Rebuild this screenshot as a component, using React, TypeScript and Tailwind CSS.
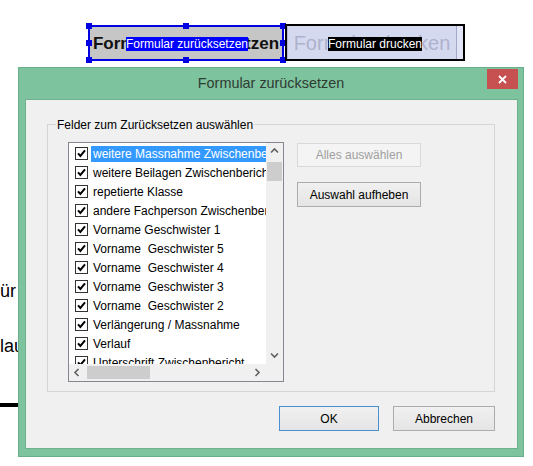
import React from "react";

const Check = () => (
  <svg width="13" height="13" viewBox="0 0 13 13" className="shrink-0">
    <rect x="0.5" y="0.5" width="12" height="12" fill="#fff" stroke="#333" />
    <path d="M3 6.3 L5.4 9 L10 3.4" fill="none" stroke="#000" strokeWidth="2" />
  </svg>
);

const Chevron = ({ dir }: { dir: "up" | "down" | "left" | "right" }) => {
  const d =
    dir === "up"
      ? "M1 5.5 L4.5 2 L8 5.5"
      : dir === "down"
      ? "M1 2.5 L4.5 6 L8 2.5"
      : dir === "left"
      ? "M5.5 1 L2 4.5 L5.5 8"
      : "M2.5 1 L6 4.5 L2.5 8";
  return (
    <svg width="9" height="9" viewBox="0 0 9 9">
      <path d={d} fill="none" stroke="#606060" strokeWidth="1.6" />
    </svg>
  );
};

const items = [
  "weitere Massnahme Zwischenbericht",
  "weitere Beilagen Zwischenbericht",
  "repetierte Klasse",
  "andere Fachperson Zwischenbericht",
  "Vorname Geschwister 1",
  "Vorname  Geschwister 5",
  "Vorname  Geschwister 4",
  "Vorname  Geschwister 3",
  "Vorname  Geschwister 2",
  "Verlängerung / Massnahme",
  "Verlauf",
  "Unterschrift Zwischenbericht",
];

const handles = [
  "left-[86px] top-[23px]",
  "left-[183px] top-[23px]",
  "left-[280px] top-[23px]",
  "left-[86px] top-[40px]",
  "left-[280px] top-[40px]",
  "left-[86px] top-[57px]",
  "left-[183px] top-[57px]",
  "left-[280px] top-[57px]",
];

export default function App() {
  return (
    <div className="relative w-[533px] h-[466px] overflow-hidden bg-white font-['Liberation_Sans',Arial,sans-serif]">
      {/* form canvas behind the dialog */}
      <div className="absolute left-[88px] top-[25px] w-[196px] h-[36px] border-2 border-[#0000e0] bg-[#c6c6c6] flex items-center justify-center">
        <span className="text-[17px] font-bold leading-none text-[#111]">Formular zurücksetzen</span>
      </div>
      {handles.map((h) => (
        <div key={h} className={`absolute ${h} w-[6px] h-[6px] bg-[#0000e0]`} />
      ))}
      <div className="absolute left-[126px] top-[37px] bg-[#0000ff] text-white text-[12px] leading-[14px] whitespace-nowrap">
        Formular zurücksetzen
      </div>

      <div className="absolute left-[285px] top-[24px] w-[180px] h-[37px] border-2 border-black bg-[#d5d9f0] flex">
        <div className="flex-1 border-l border-[#b4b8d4] flex items-center justify-center">
          <span className="text-[20px] leading-none text-[#aeb2cc] whitespace-nowrap">Formular drucken</span>
        </div>
        <div className="w-[7px] border-l border-[#a4a8c4] bg-[#e2e5f8]" />
      </div>
      <div className="absolute left-[328px] top-[37px] bg-black text-white text-[12px] leading-[14px] whitespace-nowrap">
        Formular drucken
      </div>

      <div className="absolute left-0 top-[282px] text-[18px] leading-[18px] text-black">ür</div>
      <div className="absolute left-0 top-[337px] text-[18px] leading-[18px] text-black">lauf</div>
      <div className="absolute left-0 top-[403px] w-[30px] h-[4px] bg-black" />

      {/* dialog window */}
      <div className="absolute left-[18px] top-[67px] w-[506px] h-[390px] border border-[#69ad89] bg-[#7dc39d] flex flex-col">
        <div className="relative h-[31px] shrink-0 flex items-center justify-center">
          <span className="text-[14.4px] leading-none text-[#2e3b33]">Formular zurücksetzen</span>
          <div className="absolute right-[5px] top-[1px] w-[31px] h-[20px] bg-[#c75050] flex items-center justify-center">
            <svg width="9" height="9" viewBox="0 0 9 9">
              <path d="M1 1 L8 8 M8 1 L1 8" stroke="#fff" strokeWidth="1.8" />
            </svg>
          </div>
        </div>

        <div className="flex-1 ml-[6px] mr-[5px] mb-[7px] border border-[#70b08e] bg-[#f0f0f0] flex flex-col text-[12px] text-black">
          {/* group box */}
          <div className="relative mt-[24px] ml-[21px] mr-[22px] h-[268px] border border-[#d5d5d5]">
            <span className="absolute left-[8px] top-[-7px] px-[1px] bg-[#f0f0f0] leading-[14px] whitespace-nowrap">
              Felder zum Zurücksetzen auswählen
            </span>
            <div className="pl-[20px] pt-[17px] flex gap-[13px]">
              {/* list box */}
              <div className="w-[216px] h-[240px] border border-[#828790] bg-white flex flex-col">
                <div className="flex h-[221px]">
                  <div className="w-[197px] overflow-hidden pt-[1px]">
                    {items.map((t, i) => (
                      <div key={t} className="h-[19px] flex items-center pl-[6px] gap-[3px] whitespace-pre text-[12px]">
                        <Check />
                        <span
                          className={
                            i === 0
                              ? "px-[2px] leading-[16px] bg-[#3399ff] text-white"
                              : "px-[2px] leading-[16px] text-black"
                          }
                        >
                          {t}
                        </span>
                      </div>
                    ))}
                  </div>
                  <div className="w-[17px] bg-[#f0f0f0] flex flex-col">
                    <div className="h-[17px] flex items-center justify-center">
                      <Chevron dir="up" />
                    </div>
                    <div className="mt-[2px] mx-[1px] h-[19px] bg-[#cdcdcd]" />
                    <div className="flex-1" />
                    <div className="h-[17px] flex items-center justify-center">
                      <Chevron dir="down" />
                    </div>
                  </div>
                </div>
                <div className="flex h-[17px] bg-[#f0f0f0]">
                  <div className="w-[197px] flex items-center">
                    <div className="w-[17px] h-[17px] flex items-center justify-center">
                      <Chevron dir="left" />
                    </div>
                    <div className="ml-[1px] w-[63px] h-[13px] bg-[#cdcdcd]" />
                    <div className="flex-1" />
                    <div className="w-[17px] h-[17px] flex items-center justify-center">
                      <Chevron dir="right" />
                    </div>
                  </div>
                  <div className="w-[17px]" />
                </div>
              </div>

              {/* side buttons */}
              <div className="pt-[1px] flex flex-col gap-[15px]">
                <div className="w-[124px] h-[24px] border border-[#d9d9d9] bg-[#f4f4f4] flex items-center justify-center text-[#9f9f9f]">
                  Alles auswählen
                </div>
                <div className="w-[124px] h-[25px] border border-[#acacac] bg-gradient-to-b from-[#f0f0f0] to-[#e5e5e5] flex items-center justify-center">
                  Auswahl aufheben
                </div>
              </div>
            </div>
          </div>

          {/* bottom buttons */}
          <div className="mt-[14px] mr-[22px] flex justify-end gap-[14px]">
            <div className="w-[100px] h-[25px] border border-[#4a8fd0] bg-gradient-to-b from-[#f0f0f0] to-[#e5e5e5] flex items-center justify-center">
              OK
            </div>
            <div className="w-[102px] h-[25px] border border-[#acacac] bg-gradient-to-b from-[#f0f0f0] to-[#e5e5e5] flex items-center justify-center">
              Abbrechen
            </div>
          </div>
        </div>
      </div>
    </div>
  );
}
